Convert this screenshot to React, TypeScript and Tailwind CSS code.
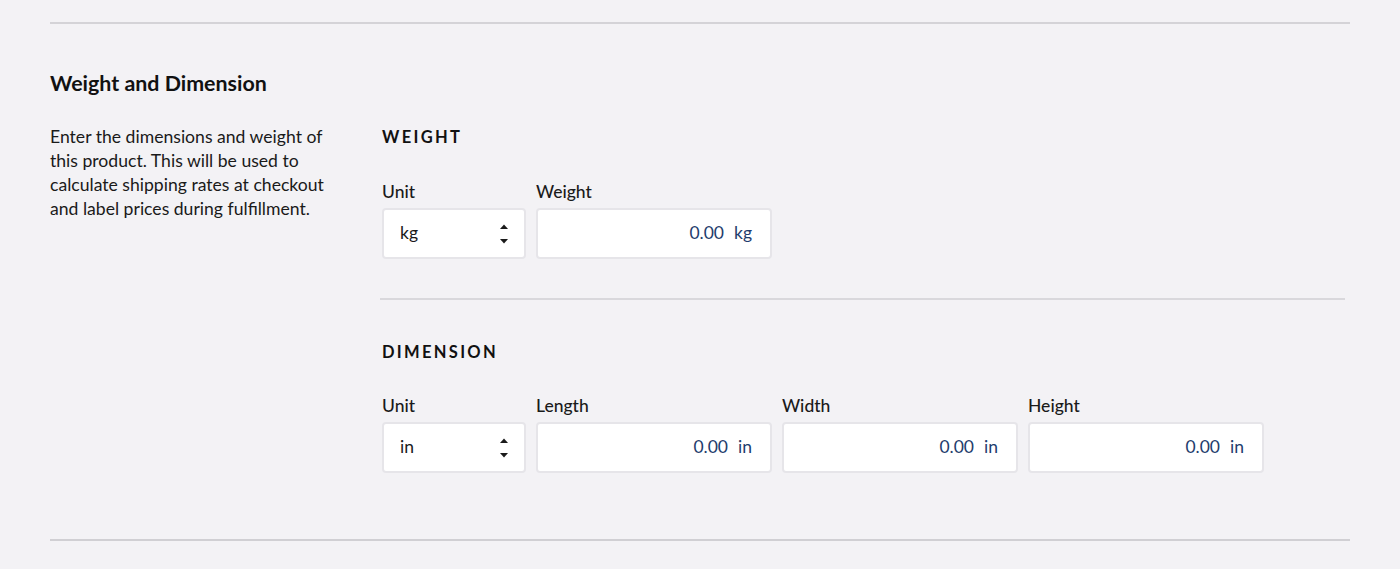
import React from "react";

const FONT = { fontFamily: "Lato, 'Open Sans', sans-serif" } as const;

function Stepper() {
  return (
    <svg width="12" height="24" viewBox="0 0 12 24" className="text-[#1a1a1a]">
      <path d="M2 7 L6 2.5 L10 7 Z" fill="currentColor" />
      <path d="M2 17 L6 21.5 L10 17 Z" fill="currentColor" />
    </svg>
  );
}

function Field({ label, children, width }: { label: string; children: React.ReactNode; width: string }) {
  return (
    <div className={`flex flex-col ${width}`}>
      <span className="text-[17.5px] leading-6 font-medium text-[#1a1a1a]">{label}</span>
      <div className="mt-1 flex h-[51px] items-center rounded-[4px] border-2 border-[#e6e5e9] bg-white">
        {children}
      </div>
    </div>
  );
}

function UnitSelect({ value }: { value: string }) {
  return (
    <Field label="Unit" width="w-[144px]">
      <div className="flex w-full items-center justify-between pl-4 pr-[14px]">
        <span className="text-[17.5px] text-[#1a1a1a]">{value}</span>
        <Stepper />
      </div>
    </Field>
  );
}

function NumberField({ label, unit }: { label: string; unit: string }) {
  return (
    <Field label={label} width="w-[236px]">
      <div className="flex w-full justify-end pr-[18px] text-[17.5px] text-[#1f3d6d]">
        <span>0.00</span>
        <span className="ml-[10px]">{unit}</span>
      </div>
    </Field>
  );
}

function SectionHeading({ children }: { children: React.ReactNode }) {
  return <h3 className="text-[16.5px] leading-6 font-bold tracking-[0.14em] text-[#111]">{children}</h3>;
}

export default function App() {
  return (
    <div style={FONT} className="min-h-[569px] bg-[#f3f2f5] px-[50px] pt-[22px]">
      <div className="h-[2px] bg-[#d4d3d7]" />
      <h2 className="mt-[47px] text-[21.4px] leading-6 font-bold text-[#111]">Weight and Dimension</h2>
      <div className="mt-[30px] flex">
        <p className="w-[290px] text-[17.6px] leading-6 text-[#1a1a1a]">
          Enter the dimensions and weight of this product. This will be used to calculate shipping rates at checkout
          and label prices during fulfillment.
        </p>
        <div className="ml-[42px] w-[963px]">
          <SectionHeading>WEIGHT</SectionHeading>
          <div className="mt-[31px] flex gap-[10px]">
            <UnitSelect value="kg" />
            <NumberField label="Weight" unit="kg" />
          </div>
          <div className="mt-[39px] -ml-[2px] h-[2px] bg-[#d9d8dc]" />
          <div className="mt-[40px]">
            <SectionHeading>DIMENSION</SectionHeading>
          </div>
          <div className="mt-[30px] flex gap-[10px]">
            <UnitSelect value="in" />
            <NumberField label="Length" unit="in" />
            <NumberField label="Width" unit="in" />
            <NumberField label="Height" unit="in" />
          </div>
        </div>
      </div>
      <div className="mt-[66px] h-[2px] bg-[#d0cfd3]" />
    </div>
  );
}
